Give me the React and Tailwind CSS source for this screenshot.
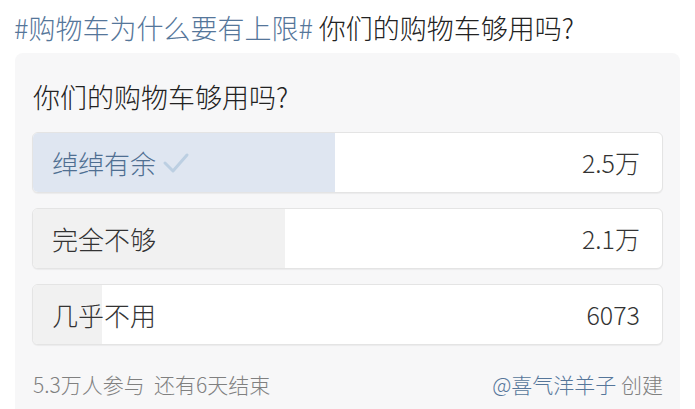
const options = [
  { label: '绰绰有余', count: '2.5万', pct: 48, chosen: true },
  { label: '完全不够', count: '2.1万', pct: 40 },
  { label: '几乎不用', count: '6073', pct: 11 },
];

function Check() {
  return (
    <svg width="28" height="24" viewBox="0 0 28 24" className="ml-[6px]">
      <path d="M3 12 L11 20 L25 4" fill="none" stroke="#bccfe2" strokeWidth="3" strokeLinecap="round" strokeLinejoin="round" />
    </svg>
  );
}

function Option({ label, count, pct, chosen }) {
  return (
    <div className="relative h-[61px] rounded-[6px] border border-[#e4e4e4] bg-white overflow-hidden shadow-[0_1px_1px_rgba(0,0,0,0.05)]">
      <div
        className={'absolute left-0 top-0 bottom-0 ' + (chosen ? 'bg-[#dfe6f1]' : 'bg-[#f1f1f1]')}
        style={{ width: pct + '%' }}
      />
      <div className="relative flex items-center h-full pl-[19px] pr-[22px]">
        <span className={'text-[26px] leading-none ' + (chosen ? 'text-[#4f6f92]' : 'text-[#333]')}>{label}</span>
        {chosen && <Check />}
        <span className="ml-auto text-[25px] leading-none text-[#333]">{count}</span>
      </div>
    </div>
  );
}

export default function App() {
  return (
    <div className="w-[695px] h-[409px] overflow-hidden bg-white font-light" style={{ fontFamily: '"Noto Sans CJK SC", "Noto Sans", sans-serif' }}>
      <div className="pl-[14px] pt-[10px] text-[27px] leading-[36px] text-[#222]">
        <span className="text-[#55769a]">#购物车为什么要有上限#</span> 你们的购物车够用吗?
      </div>
      <div className="mx-[15px] mt-[7px] bg-[#f7f7f8] rounded-t-[8px] px-[17px] pt-[26px] pb-[20px]">
        <div className="pl-[1px] text-[27px] leading-[36px] text-[#222]">你们的购物车够用吗?</div>
        <div className="mt-[17px] flex flex-col gap-[15px]">
          {options.map(o => <Option key={o.label} {...o} />)}
        </div>
        <div className="mt-[25px] flex items-center text-[21px] leading-[28px] text-[#808080]">
          <span className="pl-[1px]">5.3万人参与&nbsp;&nbsp;还有6天结束</span>
          <span className="ml-auto">
            <span className="text-[#55769a]">@喜气洋羊子</span> 创建
          </span>
        </div>
      </div>
    </div>
  );
}
